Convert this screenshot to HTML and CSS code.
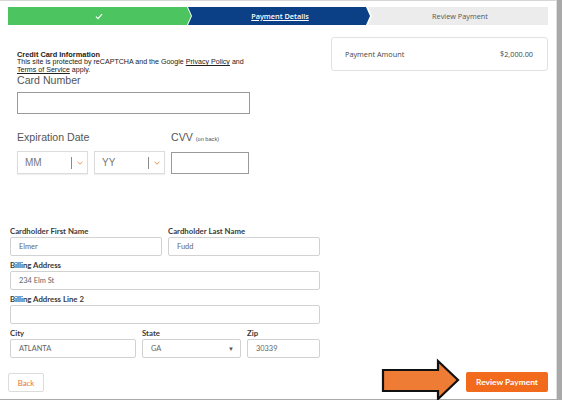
FILE: index.html
```html
<!DOCTYPE html>
<html>
<head>
<meta charset="utf-8">
<link rel="stylesheet" href="styles.css">
</head>
<body>
<div class="page">
  <div class="stepper">
    <div class="step step-done"><svg class="check" width="8" height="7" viewBox="0 0 8 7"><path d="M1 3.6 L3 5.6 L7 1.2" fill="none" stroke="#fff" stroke-width="1.2"/></svg></div>
    <div class="step step-active"><span class="step-link">Payment Details</span></div>
    <div class="step step-next">Review Payment</div>
  </div>

  <div class="main">
    <div class="left">
      <div class="cc">
        <div class="cc-title">Credit Card Information</div>
        <div class="cc-note">This site is protected by reCAPTCHA and the Google <span class="u">Privacy Policy</span> and<br><span class="u">Terms of Service</span> apply.</div>
        <div class="cc-label">Card Number</div>
        <div class="cc-input cc-card"></div>
        <div class="cc-row cc-labels">
          <div class="cc-label cc-exp">Expiration Date</div>
          <div class="cc-label">CVV <span class="cc-small">(on back)</span></div>
        </div>
        <div class="cc-row">
          <div class="cc-select"><span class="cc-sel-text">MM</span><span class="cc-divider"></span><svg class="cc-chev" width="6" height="4" viewBox="0 0 6 4"><path d="M0.5 0.8 L3 3.2 L5.5 0.8" fill="none" stroke="#e8873e" stroke-width="0.9"/></svg></div>
          <div class="cc-select"><span class="cc-sel-text">YY</span><span class="cc-divider"></span><svg class="cc-chev" width="6" height="4" viewBox="0 0 6 4"><path d="M0.5 0.8 L3 3.2 L5.5 0.8" fill="none" stroke="#e8873e" stroke-width="0.9"/></svg></div>
          <div class="cc-input cc-cvv"></div>
        </div>
      </div>

      <div class="billing">
        <div class="brow">
          <div class="field f-half"><div class="blabel">Cardholder First Name</div><div class="binput">Elmer</div></div>
          <div class="field f-half"><div class="blabel">Cardholder Last Name</div><div class="binput">Fudd</div></div>
        </div>
        <div class="field"><div class="blabel">Billing Address</div><div class="binput">234 Elm St</div></div>
        <div class="field"><div class="blabel">Billing Address Line 2</div><div class="binput"></div></div>
        <div class="brow">
          <div class="field f-city"><div class="blabel">City</div><div class="binput">ATLANTA</div></div>
          <div class="field f-state"><div class="blabel">State</div><div class="binput bselect"><span>GA</span><span class="caret">&#9660;</span></div></div>
          <div class="field f-zip"><div class="blabel">Zip</div><div class="binput">30339</div></div>
        </div>
      </div>
    </div>

    <div class="right">
      <div class="amount-card">
        <span>Payment Amount</span>
        <span>$2,000.00</span>
      </div>
    </div>
  </div>

  <div class="actions">
    <div class="btn-back">Back</div>
    <div class="btn-review">Review Payment</div>
  </div>

  <svg class="arrow" width="84" height="44" viewBox="0 0 84 44">
    <polygon points="3,12 58,12 58,3 78,22 58,41 58,33 3,33" fill="#ee7c35" stroke="#111" stroke-width="2.2" stroke-linejoin="miter"/>
  </svg>
</div>
</body>
</html>
```

FILE: styles.css
```css
html, body {
  margin: 0;
  padding: 0;
}
body {
  background: #a9a9a9;
  width: 562px;
  height: 400px;
  overflow: hidden;
}
.page {
  position: relative;
  box-sizing: border-box;
  width: 557px;
  height: 399px;
  background: #fff;
  border-top: 1px solid #d6d6d6;
  border-right: 1px solid #dedede;
  padding: 6px 8px 0 8px;
}

/* stepper */
.stepper {
  display: flex;
  height: 18px;
  width: 540px;
}
.step {
  height: 18px;
  display: flex;
  align-items: center;
  justify-content: center;
  font-family: "Open Sans", "DejaVu Sans", sans-serif;
  font-size: 7.3px;
}
.step-done {
  width: 183px;
  background: #4cc460;
  clip-path: polygon(0 0, calc(100% - 4px) 0, 100% 50%, calc(100% - 4px) 100%, 0 100%);
}
.check { margin-left: -2px; }
.step-active {
  width: 182px;
  margin-left: -3px;
  background: #0b3f86;
  color: #fff;
  font-weight: 600;
  clip-path: polygon(0 0, calc(100% - 4px) 0, 100% 50%, calc(100% - 4px) 100%, 0 100%, 4px 50%);
}
.step-link {
  text-decoration: underline;
  padding-left: 2px;
}
.step-next {
  flex: 1;
  margin-left: -2px;
  background: #ececec;
  color: #555;
  padding-left: 4px;
  clip-path: polygon(0 0, 100% 0, 100% 100%, 0 100%, 4px 50%);
}

/* main */
.main {
  display: flex;
  margin-top: 12px;
}
.left {
  width: 312px;
}
.right {
  margin-left: 11px;
  flex: 1;
}
.amount-card {
  box-sizing: border-box;
  height: 34px;
  border: 1px solid #e2e2e2;
  border-radius: 3px;
  display: flex;
  align-items: center;
  justify-content: space-between;
  padding: 0 14px 0 13px;
  font-family: "Open Sans", "DejaVu Sans", sans-serif;
  font-size: 7.3px;
  color: #444;
}

/* credit card block */
.cc {
  padding: 14px 0 0 9px;
  font-family: "Liberation Sans", Arial, sans-serif;
  color: #333;
}
.cc-title {
  font-size: 7.4px;
  line-height: 8px;
  font-weight: bold;
  color: #222;
}
.cc-note {
  font-size: 7.1px;
  line-height: 8px;
  color: #222;
  margin-top: -1px;
}
.u { text-decoration: underline; }
.cc-label {
  font-size: 10.6px;
  line-height: 12px;
  color: #555;
}
.cc-small {
  font-size: 5.6px;
}
.cc-input {
  box-sizing: border-box;
  height: 22px;
  border: 1px solid #9a9a9a;
  background: #fff;
}
.cc-card {
  width: 233px;
  margin-top: 6px;
}
.cc-row {
  display: flex;
}
.cc-labels {
  margin-top: 17px;
  margin-bottom: 6px;
}
.cc-exp {
  width: 154px;
}
.cc-select {
  box-sizing: border-box;
  width: 71px;
  height: 23px;
  margin-right: 6px;
  border: 1px solid #dcdcdc;
  box-shadow: 0 1px 1px rgba(0,0,0,0.06);
  display: flex;
  align-items: center;
  padding-left: 7px;
  font-size: 10px;
  color: #777;
}
.cc-sel-text {
  flex: 1;
}
.cc-divider {
  width: 1px;
  height: 12px;
  background: #8a8a8a;
  margin-right: 5px;
}
.cc-chev {
  margin-right: 4px;
}
.cc-cvv {
  width: 78px;
  height: 22px;
  margin-top: 1px;
}

/* billing */
.billing {
  margin-top: 53px;
  padding-left: 2px;
  width: 310px;
  font-family: Lato, "Open Sans", sans-serif;
}
.brow {
  display: flex;
  gap: 6px;
}
.field {
  margin-bottom: 5px;
}
.f-half { flex: 1; }
.f-city { width: 126px; }
.f-state { width: 99px; }
.f-zip { flex: 1; }
.blabel {
  font-size: 7.8px;
  line-height: 9px;
  font-weight: bold;
  color: #3a3a3a;
  margin-bottom: 1px;
}
.binput {
  box-sizing: border-box;
  height: 19px;
  border: 1px solid #d2d2d2;
  border-radius: 2px;
  padding-left: 8px;
  display: flex;
  align-items: center;
  font-size: 7.4px;
  color: #666;
}
.bselect {
  justify-content: space-between;
  padding-right: 6px;
}
.caret {
  font-size: 6px;
  color: #555;
}

/* actions */
.actions {
  display: flex;
  justify-content: space-between;
  align-items: center;
  margin-top: 9px;
  width: 540px;
  font-family: Lato, "Open Sans", sans-serif;
  font-size: 7.8px;
}
.btn-back {
  box-sizing: border-box;
  width: 36px;
  height: 19px;
  border: 1px solid #dcdcdc;
  border-radius: 2px;
  color: #e8703a;
  display: flex;
  align-items: center;
  justify-content: center;
  margin-top: 1px;
}
.btn-review {
  width: 82px;
  height: 20px;
  background: #f26a1b;
  border-radius: 2px;
  color: #fff;
  font-weight: bold;
  font-size: 8.4px;
  display: flex;
  align-items: center;
  justify-content: center;
}

/* annotation arrow */
.arrow {
  position: absolute;
  left: 380px;
  top: 357px;
}
```
